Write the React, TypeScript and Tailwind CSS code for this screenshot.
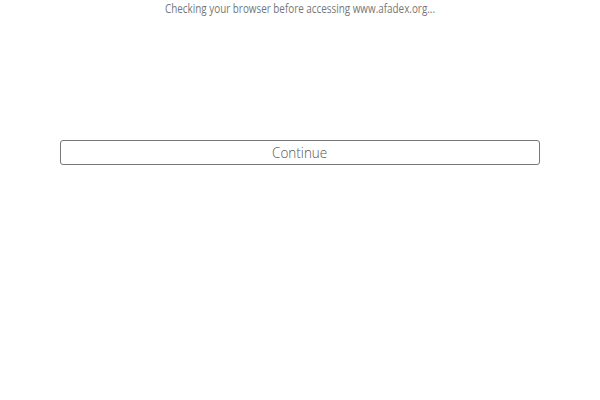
export default function App() {
  return (
    <div className="min-h-[400px] w-full bg-white font-['Open_Sans',sans-serif]">
      <div className="flex justify-center pt-[1px]">
        <p className="scale-x-[0.823] whitespace-nowrap text-[12px] leading-[16px] text-[#777]">
          Checking your browser before accessing www.afadex.org...
        </p>
      </div>
      <div className="mt-[123px] px-[60px]">
        <button className="flex h-[25px] w-full items-center justify-center rounded-[3px] border border-[#777] bg-white text-[15px] font-light text-[#555]">
          <span className="scale-x-[0.9]">Continue</span>
        </button>
      </div>
    </div>
  )
}
